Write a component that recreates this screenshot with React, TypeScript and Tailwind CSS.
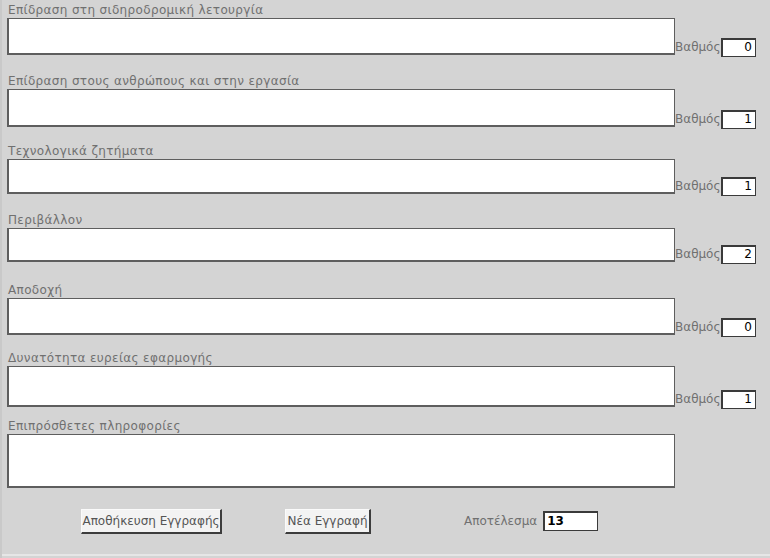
import React from "react";

const rows = [
  { label: "Επίδραση στη σιδηροδρομική λετουργία", grade: "0", top: "pt-[3px]", box: "h-[37px]" },
  { label: "Επίδραση στους ανθρώπους και στην εργασία", grade: "1", top: "pt-[19px]", box: "h-[38px]" },
  { label: "Τεχνολογικά ζητήματα", grade: "1", top: "pt-[17px]", box: "h-[35px]" },
  { label: "Περιβάλλον", grade: "2", top: "pt-[19px]", box: "h-[34px]" },
  { label: "Αποδοχή", grade: "0", top: "pt-[21px]", box: "h-[37px]" },
  { label: "Δυνατότητα ευρείας εφαρμογής", grade: "1", top: "pt-[16px]", box: "h-[41px]" },
];

function Field({ label, grade, top, box }: { label: string; grade?: string; top: string; box: string }) {
  return (
    <div className={`flex items-end ${top}`}>
      <div className="w-[668px] shrink-0">
        <div className="h-[15px] text-[12px] leading-[14px] tracking-[0.35px] text-[#707070] pl-[1px]">{label}</div>
        <div className={`${box} bg-white border border-[#5e5e5e] border-l-2 border-b-2`} />
      </div>
      {grade !== undefined && (
        <div className="flex items-center -mb-[2px]">
          <span className="w-[46px] text-[12px] text-[#707070] leading-[19px]">Βαθμός</span>
          <div className="w-[35px] h-[19px] bg-white border border-[#3a3a3a] border-t-2 border-l-2 text-right pr-[3px] text-[12px] leading-[15px] text-black">
            {grade}
          </div>
        </div>
      )}
    </div>
  );
}

export default function App() {
  return (
    <div
      className="w-[770px] h-[558px] bg-[#d4d4d4] border-l-[2px] border-[#c9c9c9] overflow-hidden"
      style={{ fontFamily: '"DejaVu Sans", "Liberation Sans", sans-serif' }}
    >
      <div className="pl-[5px] border-b-2 border-[#e6e6e6] h-[556px]">
        {rows.map((r) => (
          <Field key={r.label} {...r} />
        ))}
        <Field label="Επιπρόσθετες πληροφορίες" top="pt-[12px]" box="h-[54px]" />

        {/* Bottom actions */}
        <div className="flex items-center pt-[20px] h-[46px]">
          <button className="ml-[74px] w-[141px] h-[25px] bg-[#f3f3f3] border border-[#fafafa] border-r-2 border-b-2 border-r-[#3c3c3c] border-b-[#3c3c3c] text-[12px] text-[#555]">
            Αποθήκευση Εγγραφής
          </button>
          <button className="ml-[63px] w-[86px] h-[25px] bg-[#f3f3f3] border border-[#fafafa] border-r-2 border-b-2 border-r-[#3c3c3c] border-b-[#3c3c3c] text-[12px] text-[#555]">
            Νέα Εγγραφή
          </button>
          <span className="ml-[93px] text-[12px] text-[#707070]">Αποτέλεσμα</span>
          <div className="ml-[6px] w-[55px] h-[20px] bg-white border border-[#3a3a3a] border-t-2 border-l-2 pl-[2px] text-[12px] leading-[16px] font-bold text-black">
            13
          </div>
        </div>
      </div>
    </div>
  );
}
